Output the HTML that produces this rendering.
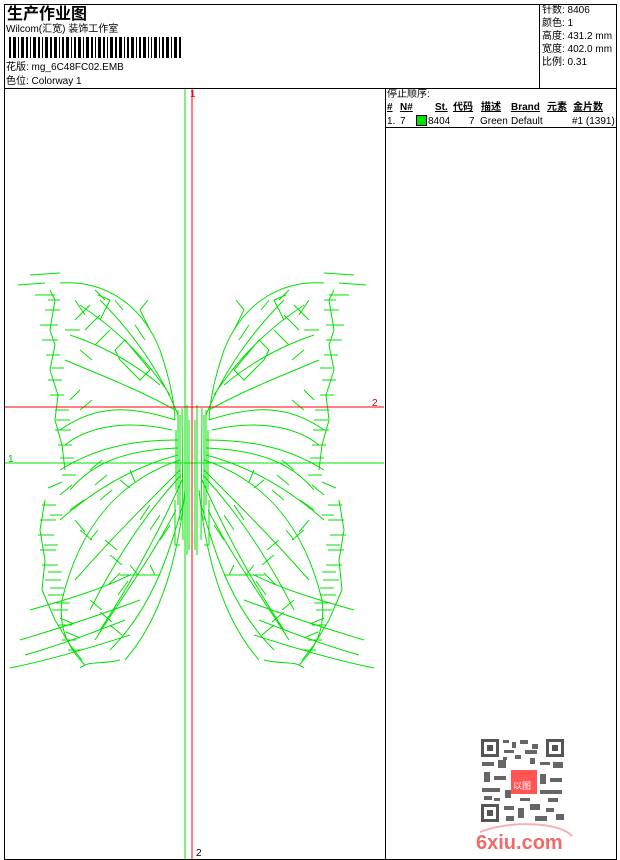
<!DOCTYPE html>
<html><head><meta charset="utf-8"><style>
*{margin:0;padding:0}
body{width:620px;height:860px;background:#fff;position:relative;overflow:hidden;font-family:"Liberation Sans","Noto Sans CJK SC",sans-serif;font-size:10px;color:#000}
.t{position:absolute;white-space:nowrap;line-height:12px}
.l{position:absolute;background:#000}
</style></head><body>
<div class="l" style="left:4px;top:4px;width:613px;height:1px"></div>
<div class="l" style="left:4px;top:859px;width:613px;height:1px"></div>
<div class="l" style="left:4px;top:4px;width:1px;height:856px"></div>
<div class="l" style="left:616px;top:4px;width:1px;height:856px"></div>
<div class="l" style="left:4px;top:88px;width:613px;height:1px"></div>
<div class="l" style="left:539px;top:4px;width:1px;height:84px"></div>
<div class="l" style="left:385px;top:88px;width:1px;height:772px"></div>
<div class="l" style="left:385px;top:127px;width:232px;height:1px"></div>

<div class="t" style="left:7px;top:3px;font-size:16px;font-weight:bold;line-height:18px;font-family:'Noto Sans CJK SC',sans-serif">生产作业图</div>
<div class="t" style="left:6px;top:24px">Wilcom(汇宽) 装饰工作室</div>
<svg style="position:absolute;left:9px;top:37px" width="175" height="21">
<g fill="#000">
<rect x="0" y="0" width="2" height="21"/><rect x="4" y="0" width="3" height="21"/><rect x="9" y="0" width="1" height="21"/><rect x="12" y="0" width="3" height="21"/><rect x="17" y="0" width="2" height="21"/><rect x="21" y="0" width="1" height="21"/><rect x="24" y="0" width="3" height="21"/><rect x="29" y="0" width="2" height="21"/><rect x="33" y="0" width="1" height="21"/><rect x="36" y="0" width="3" height="21"/><rect x="41" y="0" width="2" height="21"/><rect x="45" y="0" width="3" height="21"/><rect x="50" y="0" width="1" height="21"/><rect x="53" y="0" width="2" height="21"/><rect x="57" y="0" width="3" height="21"/><rect x="62" y="0" width="1" height="21"/><rect x="65" y="0" width="2" height="21"/><rect x="69" y="0" width="3" height="21"/><rect x="74" y="0" width="1" height="21"/><rect x="77" y="0" width="3" height="21"/><rect x="82" y="0" width="2" height="21"/><rect x="86" y="0" width="1" height="21"/><rect x="89" y="0" width="3" height="21"/><rect x="94" y="0" width="2" height="21"/><rect x="98" y="0" width="1" height="21"/><rect x="101" y="0" width="3" height="21"/><rect x="106" y="0" width="2" height="21"/><rect x="110" y="0" width="3" height="21"/><rect x="115" y="0" width="1" height="21"/><rect x="118" y="0" width="2" height="21"/><rect x="122" y="0" width="3" height="21"/><rect x="127" y="0" width="1" height="21"/><rect x="130" y="0" width="2" height="21"/><rect x="134" y="0" width="3" height="21"/><rect x="139" y="0" width="1" height="21"/><rect x="142" y="0" width="1" height="21"/><rect x="145" y="0" width="3" height="21"/><rect x="150" y="0" width="1" height="21"/><rect x="153" y="0" width="2" height="21"/><rect x="157" y="0" width="3" height="21"/><rect x="162" y="0" width="1" height="21"/><rect x="165" y="0" width="3" height="21"/><rect x="170" y="0" width="2" height="21"/>
</g></svg>
<div class="t" style="left:6px;top:62px">花版: mg_6C48FC02.EMB</div>
<div class="t" style="left:6px;top:76px">色位: Colorway 1</div>

<div class="t" style="left:542px;top:5px">针数: 8406</div>
<div class="t" style="left:542px;top:18px">颜色: 1</div>
<div class="t" style="left:542px;top:31px">高度: 431.2 mm</div>
<div class="t" style="left:542px;top:44px">宽度: 402.0 mm</div>
<div class="t" style="left:542px;top:57px">比例: 0.31</div>

<div class="t" style="left:387px;top:89px">停止顺序:</div>
<div class="t" style="left:387px;top:102px;font-weight:bold;text-decoration:underline">#</div>
<div class="t" style="left:400px;top:102px;font-weight:bold;text-decoration:underline">N#</div>
<div class="t" style="left:435px;top:102px;font-weight:bold;text-decoration:underline">St.</div>
<div class="t" style="left:453px;top:102px;font-weight:bold;text-decoration:underline">代码</div>
<div class="t" style="left:481px;top:102px;font-weight:bold;text-decoration:underline">描述</div>
<div class="t" style="left:511px;top:102px;font-weight:bold;text-decoration:underline">Brand</div>
<div class="t" style="left:547px;top:102px;font-weight:bold;text-decoration:underline">元素</div>
<div class="t" style="left:573px;top:102px;font-weight:bold;text-decoration:underline">金片数</div>
<div class="t" style="left:387px;top:116px">1.</div>
<div class="t" style="left:400px;top:116px">7</div>
<div style="position:absolute;left:416px;top:115px;width:9px;height:9px;background:#00e000;border:1px solid #000"></div>
<div class="t" style="left:428px;top:116px">8404</div>
<div class="t" style="left:469px;top:116px">7</div>
<div class="t" style="left:480px;top:116px">Green</div>
<div class="t" style="left:511px;top:116px">Default</div>
<div class="t" style="left:572px;top:116px">#1 (1391)</div>

<svg style="position:absolute;left:0;top:0" width="620" height="860">
<g stroke="#00e000" stroke-width="1" fill="none">
<line x1="185" y1="89" x2="185" y2="859"/>
<line x1="5" y1="463" x2="384" y2="463"/>
<g id="L">
<path d="M18,285 L45,283 M30,275 L60,273 M60,283 C100,280 140,300 160,350 C170,380 174,400 175,420"/>
<path d="M178,415 C160,370 130,330 100,300 M175,410 C140,390 100,375 65,360 M175,420 C130,405 95,405 60,430 M170,395 C140,350 110,325 80,305 M150,330 L140,310 L148,300 M120,360 L115,350 L125,340 L150,370 L140,380 Z M172,430 C130,420 90,425 65,445 M160,385 C130,360 100,345 70,335 M145,340 L135,325 M100,320 L110,300 L98,295"/>
<path d="M50,290 L55,300 L50,330 L55,345 L50,370 L58,395 L55,420 L62,445 L65,470"/>
<path d="M178,440 C140,440 100,445 60,470 M178,455 C140,465 100,485 60,520 M180,470 C150,500 110,540 75,580 M182,480 C160,530 130,585 100,630 M185,490 C178,560 160,620 125,660 M180,460 C120,480 80,525 62,600 C58,630 70,650 85,665 M175,500 L175,545 L180,545 M178,448 C130,450 95,460 70,490 M181,475 C140,520 110,570 90,610 M184,500 C168,560 150,610 110,650 M176,510 C150,560 120,600 95,640 M120,660 C100,665 90,660 80,668"/>
<path d="M45,500 L40,530 L45,560 L42,590 L55,620 L70,645 L82,660"/>
<path d="M10,668 C50,660 90,648 130,635 M20,640 C60,628 100,615 140,600 M30,610 C65,600 100,590 130,575 M25,655 C60,645 95,632 125,620"/>
<path d="M178,410 L178,505 M182,408 L183,540 M187,405 L187,555 M189,420 L189,550 M176,430 L176,490 M180,415 L180,520"/>
<path d="M45,310 h15 M40,325 h18 M42,340 h16 M48,380 h14 M50,395 h14 M55,410 h14 M55,430 h16 M58,445 h14 M60,458 h14 M62,475 h14 M42,505 h14 M40,520 h16 M38,535 h16 M40,550 h16 M42,565 h16 M45,580 h16 M48,595 h16 M52,610 h16 M58,625 h14 M62,640 h14 M68,650 h14 M35,295 h20 M75,320 l15,-15 M85,330 l15,-15 M95,345 l15,-15 M90,470 l12,-10 M95,485 l12,-10 M100,500 l12,-10 M105,540 l12,10 M110,555 l12,10 M120,575 h40 M130,565 l8,10 M150,565 l5,10 M90,600 l12,10 M100,612 l12,10 M110,625 l12,10 M75,300 l10,15 M95,290 l10,10 M65,330 h15 M80,350 l12,10 M140,520 l10,-15 M150,530 l10,-15 M160,540 l10,-15 M48,300 h12 M46,355 h14 M52,368 h12 M56,420 h14 M48,488 l14,-6 M60,495 l12,-10 M70,510 l14,-10 M50,515 h12 M44,545 h14 M48,572 h14 M50,588 h14 M56,603 h14 M60,618 l14,6 M66,632 l14,6 M75,520 l10,12 M80,530 l12,10 M90,540 l8,-10 M120,480 l10,8 M130,470 l5,12 M108,585 l12,-12 M118,595 l10,-14 M70,400 l10,-10 M80,410 l12,-10 M115,300 l8,10"/>
</g>
<use href="#L" transform="translate(384,0) scale(-1,1)"/>
</g>
<g stroke="#f00" stroke-width="1">
<line x1="192" y1="89" x2="192" y2="859"/>
<line x1="5" y1="407" x2="384" y2="407"/>
</g>
<text x="190" y="97" font-size="10" fill="#f00" font-family="Liberation Sans">1</text>
<text x="196" y="856" font-size="10" fill="#000" font-family="Liberation Sans">2</text>
<text x="372" y="406" font-size="10" fill="#c00" font-family="Liberation Sans">2</text>
<text x="8" y="462" font-size="10" fill="#00c000" font-family="Liberation Sans">1</text>
<g fill="#555">
<rect x="481" y="739" width="18" height="18"/><rect x="546" y="739" width="18" height="18"/><rect x="481" y="804" width="18" height="18"/>
</g>
<g fill="#fff"><rect x="484" y="742" width="12" height="12"/><rect x="549" y="742" width="12" height="12"/><rect x="484" y="807" width="12" height="12"/></g>
<g fill="#555"><rect x="487" y="745" width="6" height="6"/><rect x="552" y="745" width="6" height="6"/><rect x="487" y="810" width="6" height="6"/></g>
<g fill="#666">
<rect x="503" y="740" width="6" height="3"/><rect x="512" y="742" width="4" height="6"/><rect x="520" y="740" width="8" height="4"/><rect x="532" y="744" width="6" height="5"/><rect x="504" y="750" width="10" height="3"/><rect x="525" y="750" width="12" height="4"/><rect x="482" y="762" width="12" height="4"/><rect x="498" y="760" width="8" height="8"/><rect x="540" y="762" width="10" height="3"/><rect x="553" y="762" width="10" height="6"/><rect x="484" y="772" width="6" height="10"/><rect x="494" y="776" width="12" height="4"/><rect x="540" y="774" width="6" height="10"/><rect x="550" y="778" width="12" height="4"/><rect x="482" y="788" width="18" height="4"/><rect x="505" y="790" width="6" height="8"/><rect x="540" y="790" width="22" height="4"/><rect x="504" y="806" width="10" height="4"/><rect x="518" y="808" width="6" height="10"/><rect x="530" y="804" width="10" height="6"/><rect x="546" y="808" width="8" height="4"/><rect x="556" y="814" width="8" height="6"/><rect x="506" y="816" width="8" height="5"/><rect x="535" y="816" width="12" height="5"/>
<rect x="503" y="757" width="4" height="3"/><rect x="515" y="755" width="6" height="4"/><rect x="530" y="758" width="5" height="6"/><rect x="484" y="796" width="8" height="4"/><rect x="494" y="798" width="6" height="3"/><rect x="520" y="798" width="10" height="3"/><rect x="548" y="798" width="10" height="4"/>
</g>
<rect x="511" y="770" width="26" height="24" fill="#f55"/>
<text x="513" y="789" font-size="9" fill="#fff" font-family="Noto Sans CJK SC">以图</text>
<path d="M480,832 C510,820 560,822 572,836" stroke="#f7b0b0" stroke-width="2" fill="none"/>
<text x="476" y="849" font-size="20" font-weight="bold" fill="#f06a6a" font-family="Liberation Sans">6xiu.com</text>
</svg>
</body></html>
